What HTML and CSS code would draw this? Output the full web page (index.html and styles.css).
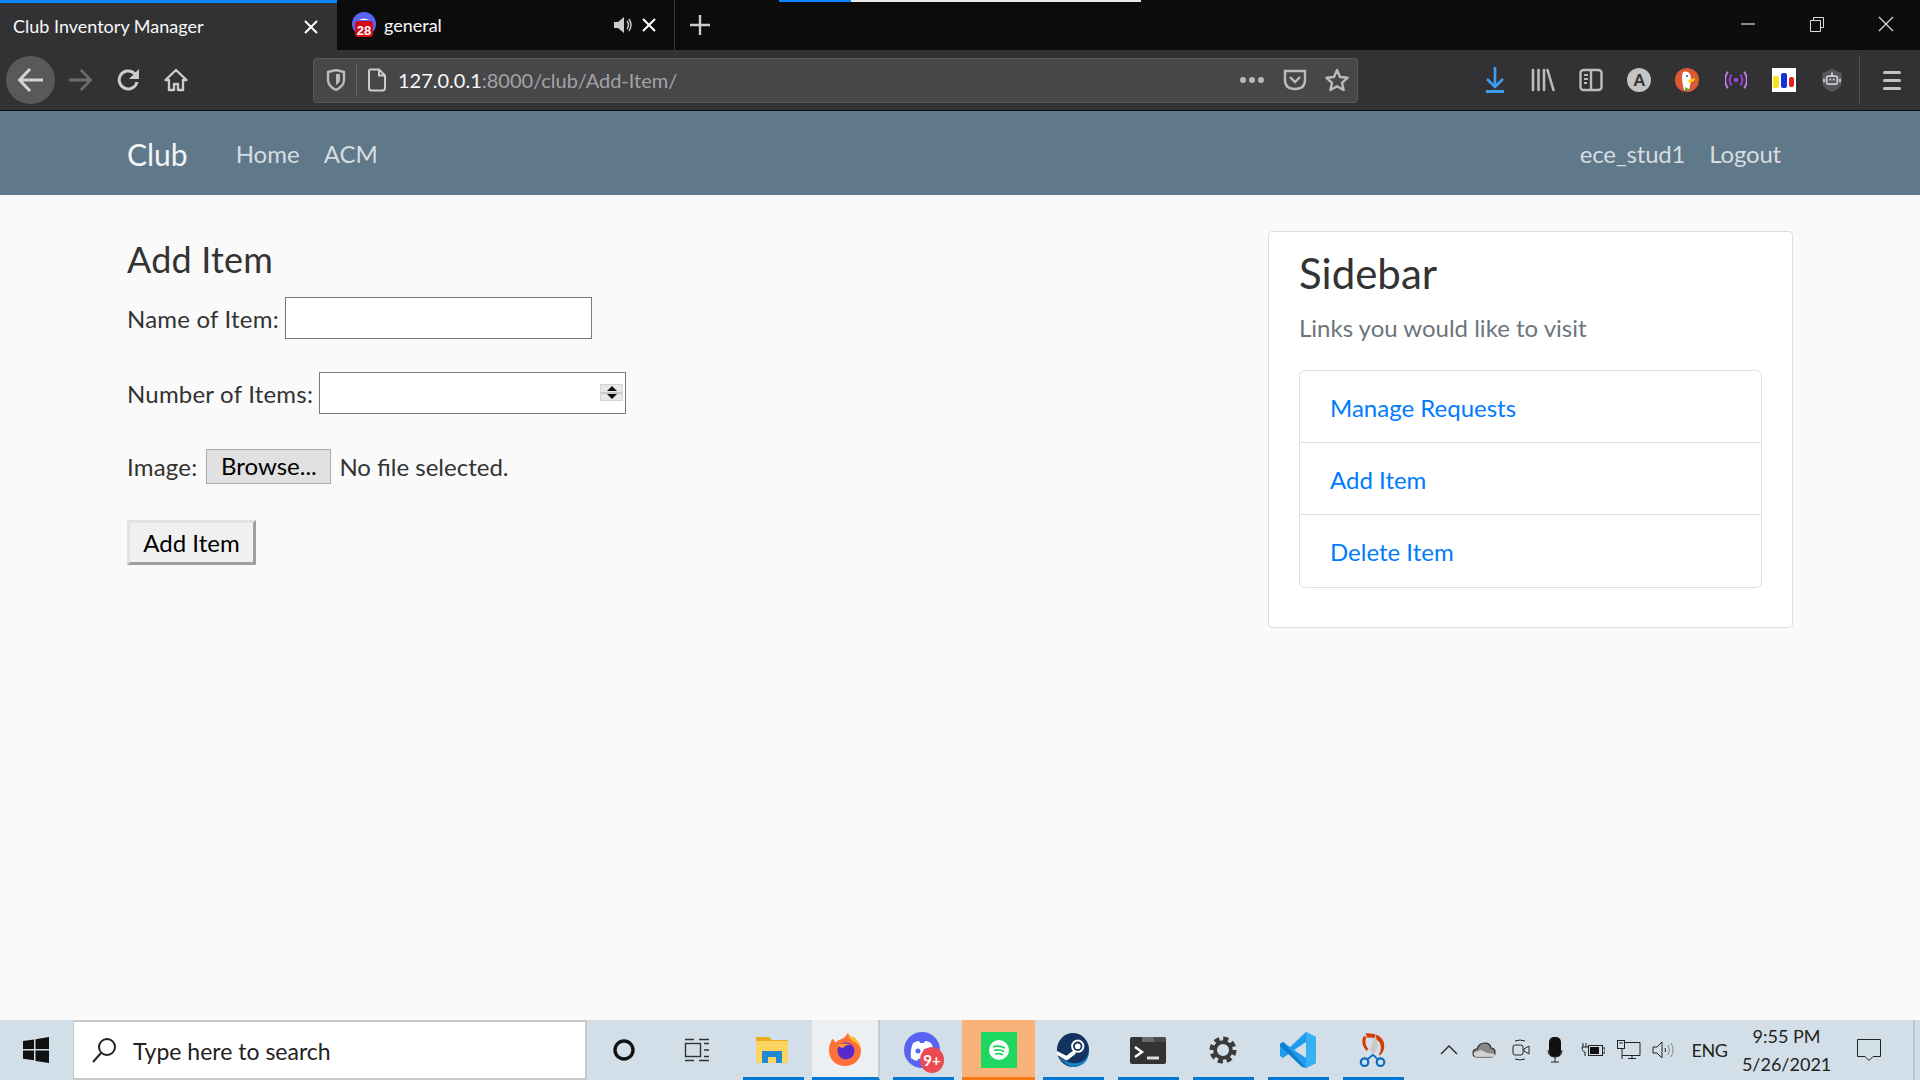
FILE: index.html
```html
<!DOCTYPE html>
<html lang="en">
<head>
  <meta charset="UTF-8">
  <title>Club Inventory Manager</title>
  <link rel="stylesheet" href="styles.css">
</head>
<body>
  <div class="tabbar">
    <div class="tab tab-active">
      <span class="tab-title">Club Inventory Manager</span>
      <svg class="tab-x" width="16" height="16" viewBox="0 0 16 16"><path d="M2 2l12 12M14 2L2 14" stroke="#fff" stroke-width="2"/></svg>
    </div>
    <div class="tab tab-other">
      <svg class="favicon" width="24" height="26" viewBox="0 0 24 26"><circle cx="12" cy="12" r="12" fill="#5865f2"/><path d="M7 8q5-3 10 0z" fill="#fff"/><rect x="3" y="9" width="18" height="16" rx="3" fill="#d40c13"/><text x="12" y="22.5" class="fav-num">28</text></svg>
      <span class="tab-title">general</span>
      <svg class="tab-sound" width="20" height="18" viewBox="0 0 20 18"><path d="M1 6h4l6-5v16l-6-5H1z" fill="#ccc"/><path d="M14 5q3 4 0 8M16 3q4 6 0 12" stroke="#ccc" stroke-width="1.4" fill="none"/></svg>
      <svg class="tab-x" width="16" height="16" viewBox="0 0 16 16"><path d="M2 2l12 12M14 2L2 14" stroke="#fff" stroke-width="2"/></svg>
    </div>
    <div class="tab-new">
      <svg width="22" height="22" viewBox="0 0 22 22"><path d="M11 1v20M1 11h20" stroke="#ccc" stroke-width="2.4"/></svg>
    </div>
    <div class="tab-fill"><div class="tab-progress"></div></div>
    <div class="win-btn"><svg width="16" height="16" viewBox="0 0 16 16"><path d="M1 8h14" stroke="#ddd" stroke-width="1.2"/></svg></div>
    <div class="win-btn"><svg width="16" height="16" viewBox="0 0 16 16"><path d="M1.500 4.500h10v11h-10zM4.500 4V1.500h10v10H12" stroke="#ddd" fill="none"/></svg></div>
    <div class="win-btn"><svg width="18" height="18" viewBox="0 0 18 18"><path d="M2 2l14 14M16 2L2 16" stroke="#ddd" stroke-width="1.2"/></svg></div>
  </div>

  <div class="toolbar">
    <div class="nav-btn nav-back"><svg width="28" height="26" viewBox="0 0 28 26"><path d="M26 13H3M13 2L2.500 13 13 24" stroke="#d4d4d4" stroke-width="3" fill="none"/></svg></div>
    <div class="nav-btn"><svg width="26" height="24" viewBox="0 0 28 26"><path d="M2 13h23M15 2l10.500 11L15 24" stroke="#6d6d6f" stroke-width="3" fill="none"/></svg></div>
    <div class="nav-btn"><svg width="24" height="24" viewBox="0 0 24 24"><path d="M20 14a9 9 0 1 1-3-9l4 3" stroke="#ccc" stroke-width="3" fill="none"/><path d="M22 1v10H12z" fill="#ccc"/></svg></div>
    <div class="nav-btn nav-home"><svg width="24" height="24" viewBox="0 0 24 24"><path d="M12 2L1.500 12H5v10h5v-6h4v6h5V12h3.500z" stroke="#ccc" stroke-width="2.400" fill="none" stroke-linejoin="round"/></svg></div>

    <div class="urlbar">
      <svg class="url-shield" width="20" height="22" viewBox="0 0 20 22"><path d="M2 3l8-2 8 2v8q0 6-8 10-8-4-8-10z" stroke="#bbb" stroke-width="2.400" fill="none"/><path d="M10 5h4v6q0 3-4 5z" fill="#bbb"/></svg>
      <span class="url-sep"></span>
      <svg class="url-page" width="20" height="24" viewBox="0 0 20 24"><path d="M3 1.500h9l6 6V20q0 2.500-2.500 2.500h-11Q2 22.500 2 20V3q0-1.500 1-1.500zM12 1.500v6h6" stroke="#ccc" stroke-width="2" fill="none"/></svg>
      <span class="url-text"><span class="url-host">127.0.0.1</span>:8000/club/Add-Item/</span>
      <svg class="url-dots" width="26" height="8" viewBox="0 0 26 8"><circle cx="4" cy="4" r="3" fill="#bbb"/><circle cx="13" cy="4" r="3" fill="#bbb"/><circle cx="22" cy="4" r="3" fill="#bbb"/></svg>
      <svg class="url-pocket" width="24" height="22" viewBox="0 0 24 22"><path d="M2 2h20v9q0 9-10 9T2 11z" stroke="#bbb" stroke-width="2.400" fill="none"/><path d="M7 8l5 5 5-5" stroke="#bbb" stroke-width="2.400" fill="none"/></svg>
      <svg class="url-star" width="24" height="24" viewBox="0 0 24 24"><path d="M12 2l3 7 7.500.8-5.500 5 1.600 7.200L12 18.300 5.400 22 7 14.800l-5.500-5L9 9z" stroke="#bbb" stroke-width="2.400" fill="none" stroke-linejoin="round"/></svg>
    </div>

    <div class="tool-icons">
      <div class="tool-slot"><svg width="20" height="26" viewBox="0 0 20 26"><path d="M10 0v20M2 12l8 8 8-8" stroke="#3d9df5" stroke-width="2.600" fill="none"/><path d="M1 24.500h18" stroke="#3d9df5" stroke-width="3"/></svg></div>
      <div class="tool-slot"><svg width="24" height="24" viewBox="0 0 24 24"><path d="M2 2v20M7.500 2v20M13 2v20M16.500 2l6 20" stroke="#bbb" stroke-width="2.600" stroke-linecap="round"/></svg></div>
      <div class="tool-slot"><svg width="24" height="24" viewBox="0 0 24 24"><rect x="1.500" y="2" width="21" height="20" rx="3" stroke="#bbb" stroke-width="2.400" fill="none"/><path d="M12 2v20" stroke="#bbb" stroke-width="2.400"/><path d="M5 7h4M5 11h4M5 15h3" stroke="#bbb" stroke-width="2"/></svg></div>
      <div class="tool-slot"><span class="ext-a">A</span></div>
      <div class="tool-slot"><svg width="24" height="24" viewBox="0 0 24 24"><circle cx="12" cy="12" r="12" fill="#de5833"/><path d="M8 4q7-2 8 6v3l-2 9H9Q7 14 7 10q0-4 1-6z" fill="#fff"/><path d="M13 12l7-2-1 3-5 2z" fill="#fdd20a"/><path d="M10 19l4 2v2l-4-1z" fill="#4cba3c"/><circle cx="12" cy="8" r="1" fill="#2d4f8e"/></svg></div>
      <div class="tool-slot"><svg width="22" height="20" viewBox="0 0 24 22"><circle cx="12" cy="11" r="2.500" fill="#a33fd6"/><path d="M7 5q-4 6 0 12M17 5q4 6 0 12" stroke="#a33fd6" stroke-width="2" fill="none"/><path d="M3 2q-6 9 0 18M21 2q6 9 0 18" stroke="#c77fe0" stroke-width="2" fill="none"/></svg></div>
      <div class="tool-slot"><svg width="24" height="24" viewBox="0 0 24 24"><rect width="24" height="24" fill="#fff"/><rect x="1" y="8" width="6" height="12" rx="2" fill="#f6e71c"/><rect x="9" y="5" width="6" height="15" rx="2" fill="#1432d8"/><rect x="17" y="9" width="5" height="10" rx="2" fill="#e6201f"/></svg></div>
      <div class="tool-slot"><svg width="24" height="25" viewBox="0 0 24 28"><path d="M12 1l11 5v9q0 8-11 12Q1 23 1 15V6z" fill="#55565a"/><rect x="6" y="9" width="12" height="9" rx="2" stroke="#ccc" stroke-width="2" fill="none"/><circle cx="10" cy="13" r="1.300" fill="#ccc"/><circle cx="14" cy="13" r="1.300" fill="#ccc"/><path d="M12 5v4M3 12v4M21 12v4" stroke="#ccc" stroke-width="2"/></svg></div>
      <span class="tool-sep"></span>
      <div class="tool-slot tool-menu"><span></span><span></span><span></span></div>
    </div>
  </div>

  <nav class="navbar">
    <a class="brand">Club</a>
    <a class="nav-link">Home</a>
    <a class="nav-link">ACM</a>
    <div class="nav-right">
      <a class="nav-link">ece_stud1</a>
      <a class="nav-link">Logout</a>
    </div>
  </nav>

  <main class="page">
    <form class="item-form">
      <h4 class="form-title">Add Item</h4>
      <div class="form-row">
        <label for="item-name">Name of Item:</label>
        <input id="item-name" class="field" type="text">
      </div>
      <div class="form-row row-number">
        <label for="item-count">Number of Items:</label>
        <div class="number-wrap">
          <input id="item-count" class="field" type="text">
          <span class="spinner"><i class="up"></i><i class="down"></i></span>
        </div>
      </div>
      <div class="form-row row-image">
        <label class="image-label">Image:</label>
        <button class="browse" type="button">Browse...</button>
        <span class="file-name">No file selected.</span>
      </div>
      <button class="submit" type="button">Add Item</button>
    </form>

    <aside class="sidebar">
      <h3 class="sidebar-title">Sidebar</h3>
      <p class="sidebar-note">Links you would like to visit</p>
      <ul class="link-list">
        <li><a>Manage Requests</a></li>
        <li><a>Add Item</a></li>
        <li><a>Delete Item</a></li>
      </ul>
    </aside>
  </main>

  <footer class="taskbar">
    <div class="start"><svg width="26" height="26" viewBox="0 0 26 26"><path d="M0 4l11-1.600V12H0zM12.500 2.200L26 0v12H12.500zM0 13.500h11v9.800L0 21.800zM12.500 13.500H26V26l-13.500-2z" fill="#111"/></svg></div>
    <div class="search">
      <svg width="26" height="26" viewBox="0 0 26 26"><circle cx="16" cy="10" r="8" stroke="#222" stroke-width="2" fill="none"/><path d="M10 16L2 25" stroke="#222" stroke-width="2"/></svg>
      <span class="search-text">Type here to search</span>
    </div>
    <div class="task-plain"><svg width="24" height="24" viewBox="0 0 24 24"><circle cx="12" cy="12" r="9" stroke="#111" stroke-width="3.400" fill="none"/></svg></div>
    <div class="task-plain task-view"><svg width="26" height="24" viewBox="0 0 26 24"><path d="M1 1.500h9M1 22.500h9M15 1.500h10M15 22.500h10" stroke="#333" stroke-width="1.400"/><rect x="1.500" y="5.500" width="15" height="13" stroke="#333" stroke-width="1.400" fill="none"/><path d="M20 5.500h5M20 12h5M20 18.500h5" stroke="#333" stroke-width="1.400"/></svg></div>

    <div class="apps">
      <div class="app"><svg width="32" height="26" viewBox="0 0 32 26"><path d="M0 0h13l3 3h16v23H0z" fill="#e9ad1d"/><rect y="4" width="32" height="22" rx="1" fill="#fcd462"/><path d="M6 26V14h20v12h-6v-6h-8v6z" fill="#1f8ad2"/></svg></div>
      <div class="app app-open"><svg width="34" height="34" viewBox="0 0 34 36"><path d="M17 35C7 35 0 28 0 18 0 14 2 8 4 6l3 4q3-3 7-4 3-1 6-6 2 4 7 5 6 5 7 13c0 10-7 17-17 17z" fill="#ff7139"/><path d="M20 0q2 4 7 5 6 5 7 13-2-6-8-9-5-3-6-9z" fill="#ffbd29"/><circle cx="18" cy="19" r="9" fill="#592acb"/><path d="M9 13q8-4 15 0-7-1-9 3-3 0-6-3z" fill="#ff9a2e"/></svg></div>
      <div class="app"><div class="discord">
        <svg width="36" height="36" viewBox="0 0 36 36"><circle cx="18" cy="18" r="18" fill="#5865f2"/><path d="M9 11q4-2 6-2l1 2h4l1-2q3 0 6 2 4 7 3 15-3 2-6 3l-1.500-2.500q-5 1.500-8 0L13 29q-3-1-6-3-1-8 2-15z" fill="#fff"/><circle cx="14" cy="19" r="2.500" fill="#5865f2"/><circle cx="22" cy="19" r="2.500" fill="#5865f2"/></svg>
        <span class="badge">9+</span>
      </div></div>
      <div class="app app-spotify"><div class="spotify-tile"><svg width="20" height="20" viewBox="0 0 20 20"><circle cx="10" cy="10" r="10" fill="#fff"/><path d="M4 7q6-2 12 1M5 10.500q5-1.500 10 1M6 14q4-1 8 .8" stroke="#1ed760" stroke-width="1.800" fill="none"/></svg></div></div>
      <div class="app"><svg width="34" height="34" viewBox="0 0 34 36"><ellipse cx="17" cy="18" rx="17" ry="18" fill="#123360"/><path d="M1 24q7 10 16 12 17-1 17-18-2 14-16 14-9-1-17-8z" fill="#1a83c4"/><circle cx="22" cy="14" r="6" stroke="#fff" stroke-width="2" fill="none"/><circle cx="22" cy="14" r="3" fill="#fff"/><path d="M0 19l10 5 8-6 2 4-8 6-2 1-10-6z" fill="#fff"/></svg></div>
      <div class="app"><svg width="36" height="27" viewBox="0 0 36 27"><rect width="36" height="27" rx="2" fill="#333"/><path d="M12 0h12v5H12z" fill="#6a6a6a"/><path d="M24 0h10l2 2v3H24z" fill="#4a4a4a"/><path d="M5 10l7 5-7 5" stroke="#fff" stroke-width="2.400" fill="none"/><path d="M17 21h12" stroke="#ddd" stroke-width="3"/></svg></div>
      <div class="app"><svg width="28" height="28" viewBox="0 0 30 30"><circle cx="15" cy="15" r="8.500" stroke="#3a3a3a" stroke-width="4" fill="none"/><circle cx="15" cy="15" r="12" stroke="#3a3a3a" stroke-width="5" stroke-dasharray="5.400 4" fill="none"/></svg></div>
      <div class="app"><svg width="36" height="36" viewBox="0 0 36 36"><path d="M26 0l10 5v26l-10 5-16-15-7 5-3-2V12l3-2 7 5zM26 10L14 18l12 8z" fill="#1f9cf0"/><path d="M26 0l10 5v26l-10 5z" fill="#35b0f2"/><path d="M0 12l3-2 23 26-4-1L0 14z" fill="#0d7ed0"/></svg></div>
      <div class="app"><svg width="30" height="36" viewBox="0 0 32 38"><path d="M8 1q20 0 20 14 0 6-5 10-1-2 1-5 2-8-4-12-4-3-10-2z" fill="#d83b01"/><path d="M6 4q-4 8 3 16l2-2Q6 12 9 5z" fill="#d83b01"/><path d="M19 2l2 15-5 7-3-6z" fill="#c8c8c8"/><path d="M16 24l-6 5M16 24l5 5" stroke="#0b6cc4" stroke-width="2"/><circle cx="7" cy="32" r="4" stroke="#0b6cc4" stroke-width="2.400" fill="none"/><circle cx="24" cy="32" r="4" stroke="#0b6cc4" stroke-width="2.400" fill="none"/></svg></div>
    </div>

    <div class="tray">
      <svg class="tray-chevron" width="18" height="10" viewBox="0 0 18 10"><path d="M1 9l8-8 8 8" stroke="#222" stroke-width="1.300" fill="none"/></svg>
      <svg class="tray-cloud" width="24" height="16" viewBox="0 0 24 16"><path d="M5 15q-4 0-4-4t4-4q2-6 8-6 5 0 6 5 4 0 4 4.500T19 15z" fill="#888" stroke="#222" stroke-width="1.200"/><path d="M1 11l8-3 6 3 8 1v3H3z" fill="#f2f2f2" opacity=".7"/></svg>
      <svg class="tray-cam" width="18" height="24" viewBox="0 0 18 24"><rect x="1" y="7" width="10" height="10" rx="2" stroke="#222" fill="none"/><path d="M12 11l5-3v8l-5-3z" stroke="#222" fill="none"/><path d="M3 3q5-2 10 0M3 21q5 2 10 0" stroke="#222" fill="none"/></svg>
      <svg class="tray-mic" width="16" height="26" viewBox="0 0 16 26"><rect x="2" y="0" width="12" height="20" rx="5" fill="#111"/><path d="M1 13q0 7 7 7t7-7M8 20v5M4 25h8" stroke="#222" fill="none"/></svg>
      <svg class="tray-batt" width="24" height="16" viewBox="0 0 24 16"><rect x="7.500" y="3.500" width="14" height="10" stroke="#222" fill="none"/><rect x="9" y="5" width="9" height="7" fill="#111"/><path d="M22 6h2v5h-2M1 5h6M1 5q0 5 3 5v4" stroke="#222" fill="none"/><path d="M2 5V1M5 5V1" stroke="#222"/></svg>
      <svg class="tray-net" width="24" height="20" viewBox="0 0 24 20"><path d="M5 2.500h18v13H5M5 9v10M11 18.500h8M15 15.500v3" stroke="#222" fill="none"/><rect x=".5" y=".5" width="7" height="8" stroke="#222" fill="#d3dfe8"/><path d="M2 3h4" stroke="#222"/></svg>
      <svg class="tray-vol" width="24" height="18" viewBox="0 0 24 18"><path d="M1 6h4l5-5v16l-5-5H1z" stroke="#222" fill="none"/><path d="M13 7q1 2 0 4" stroke="#222" fill="none"/><path d="M16 4q3 5 0 10M19 2q4 7 0 14" stroke="#888" fill="none"/></svg>
      <span class="tray-lang">ENG</span>
      <div class="clock"><span>9:55 PM</span><span>5/26/2021</span></div>
      <svg class="tray-note" width="24" height="24" viewBox="0 0 24 24"><path d="M.5 1.500h23v17H16l-4 4-4-4H.5z" stroke="#222" fill="none"/></svg>
      <span class="show-desktop"></span>
    </div>
  </footer>
</body>
</html>
```

FILE: styles.css
```css
* {
  box-sizing: border-box;
}
html, body {
  height: 100%;
}
body {
  margin: 0;
  display: flex;
  flex-direction: column;
  height: 1080px;
  overflow: hidden;
  background-color: #fafafa;
  color: #333333;
  font-family: "Lato", "Noto Sans", sans-serif;
  font-size: 24px;
  line-height: 1.5;
}

/* browser tabs */
.tabbar {
  display: flex;
  height: 50px;
  background-color: #0c0c0d;
  color: #f9f9fa;
  font-size: 18px;
}
.tab {
  display: flex;
  align-items: center;
  height: 50px;
}
.tab-active {
  width: 337px;
  padding: 0 18px 0 13px;
  background-color: #323234;
  border-top: 3px solid #0a84ff;
}
.tab-other {
  width: 338px;
  padding: 0 17px 0 15px;
  border-right: 1px solid #3a3a3c;
}
.favicon {
  margin-right: 8px;
}
.fav-num {
  font-family: "Liberation Sans", sans-serif;
  font-size: 13px;
  font-weight: bold;
  fill: #fff;
  text-anchor: middle;
}
.tab-title {
  flex: 1;
}
.tab-sound {
  margin-right: 8px;
}
.tab-new {
  display: flex;
  align-items: center;
  justify-content: center;
  width: 50px;
}
.tab-fill {
  flex: 1;
}
.tab-progress {
  width: 362px;
  height: 2px;
  margin-left: 54px;
  background: linear-gradient(to right, #0a84ff 0 72px, #e8e8e8 72px);
}
.win-btn {
  display: flex;
  align-items: center;
  justify-content: center;
  width: 69px;
  height: 48px;
}

/* browser toolbar */
.toolbar {
  display: flex;
  align-items: center;
  height: 61px;
  padding: 0 0 0 6px;
  background-color: #323234;
  border-bottom: 1px solid #0c0c0d;
}
.nav-btn {
  display: flex;
  align-items: center;
  justify-content: center;
  flex: none;
  width: 49px;
  height: 48px;
  border-radius: 50%;
}
.nav-back {
  background-color: #59595b;
}
.nav-home {
  padding-right: 3px;
}
.urlbar {
  display: flex;
  align-items: center;
  flex: none;
  width: 1045px;
  height: 45px;
  margin-left: 111px;
  padding: 0 8px 0 12px;
  background-color: #474749;
  border: 1px solid #58585a;
  border-radius: 3px;
  font-size: 20px;
  color: #a3a3a5;
}
.url-sep {
  width: 1px;
  height: 32px;
  margin: 0 10px 0 10px;
  background-color: #66666a;
}
.url-text {
  flex: 1;
  margin-left: 11px;
}
.url-host {
  color: #f9f9fa;
}
.url-dots {
  margin-right: 18px;
}
.url-pocket {
  margin-right: 18px;
}
.tool-icons {
  display: flex;
  align-items: center;
  flex: none;
  height: 50px;
  padding-left: 113px;
}
.tool-slot {
  display: flex;
  align-items: center;
  justify-content: center;
  width: 48.100px;
  height: 48px;
  flex: none;
}
.ext-a {
  display: flex;
  align-items: center;
  justify-content: center;
  width: 24px;
  height: 24px;
  border-radius: 50%;
  background-color: #c4c4c4;
  color: #333;
  font-size: 16px;
  font-weight: 900;
}
.tool-sep {
  width: 1px;
  height: 50px;
  margin-left: 3px;
  background-color: #4e4e50;
}
.tool-menu {
  flex-direction: column;
  gap: 5px;
  width: 60px;
  padding-left: 4px;
}
.tool-menu span {
  display: block;
  width: 18px;
  height: 3px;
  border-radius: 2px;
  background-color: #c4c4c4;
}

/* site navbar */
.navbar {
  display: flex;
  align-items: center;
  height: 84px;
  padding: 2px 127px 0;
  background-color: #5f788a;
  color: rgba(255, 255, 255, 0.75);
}
.brand {
  margin-right: 36px;
  font-size: 30px;
  color: #fff;
  opacity: 0.92;
}
.navbar .nav-link {
  padding: 0 12px;
}
.nav-right {
  display: flex;
  margin-left: auto;
  letter-spacing: -0.2px;
}
.nav-right .nav-link:last-child {
  padding-right: 12px;
}

/* page */
.page {
  display: flex;
  flex: 1;
  justify-content: space-between;
  align-items: flex-start;
  padding: 36px 127px 0;
}
.item-form {
  display: flex;
  flex-direction: column;
  align-items: flex-start;
  letter-spacing: 0.2px;
}
.form-title {
  margin: 7px 0 16px;
  font-size: 36px;
  font-weight: 400;
  line-height: 43px;
}
.form-row {
  display: flex;
  align-items: center;
  gap: 6px;
  height: 42px;
}
.form-row label, .file-name {
  padding-top: 2px;
}
.image-label {
  margin-right: 3px;
}
.file-name {
  letter-spacing: 0;
}
.field {
  display: block;
  width: 307px;
  height: 42px;
  padding: 0 6px;
  background-color: #fff;
  border: 1.500px solid #7a7a7a;
  font: inherit;
}
.row-number {
  margin-top: 33px;
}
.number-wrap {
  position: relative;
}
.spinner {
  position: absolute;
  top: 12px;
  right: 3px;
  display: flex;
  flex-direction: column;
  justify-content: center;
  gap: 3px;
  width: 23px;
  height: 17px;
  background: linear-gradient(#e8e8e8 7px, #c8c8c8 7px, #c8c8c8 9px, #e8e8e8 9px);
  border: 1px solid #d4d4d4;
}
.spinner i {
  align-self: center;
  width: 0;
  height: 0;
  border-left: 5px solid transparent;
  border-right: 5px solid transparent;
}
.spinner .up {
  border-bottom: 5px solid #111;
}
.spinner .down {
  border-top: 5px solid #111;
}
.row-image {
  height: 34px;
  margin-top: 35px;
}
.browse {
  width: 125px;
  height: 35px;
  padding: 0;
  margin-right: 2px;
  background-color: #e1e1e1;
  border: 1px solid #adadad;
  color: #000;
  font: inherit;
  line-height: 1;
}
.submit {
  width: 129px;
  height: 45px;
  margin-top: 37px;
  padding: 0;
  background-color: #f0f0f0;
  border: 3px solid;
  border-color: #e3e3e3 #a0a0a0 #a0a0a0 #e3e3e3;
  color: #000;
  font: inherit;
  line-height: 1;
}
.sidebar {
  width: 525px;
  padding: 16px 30px 39px;
  background-color: #fff;
  border: 1px solid #dddddd;
  border-radius: 4px;
}
.sidebar-title {
  margin: 0 0 12px;
  font-size: 42px;
  font-weight: 400;
  line-height: 1.2;
}
.sidebar-note {
  margin: 0 0 24px;
  color: #6c757d;
}
.link-list {
  margin: 0;
  padding: 0;
  list-style: none;
  background-color: #fff;
  border: 1px solid #dfdfdf;
  border-radius: 6px;
}
.link-list li {
  height: 72px;
  padding: 19px 30px 0;
  border-bottom: 1px solid #dfdfdf;
  color: #007bff;
}
.link-list li:last-child {
  border-bottom: 0;
}

/* windows taskbar */
.taskbar {
  display: flex;
  align-items: center;
  flex: none;
  height: 60px;
  background-color: #d3dfe8;
  color: #222;
}
.start {
  display: flex;
  justify-content: center;
  flex: none;
  width: 73px;
  padding-right: 2px;
}
.search {
  display: flex;
  align-items: center;
  flex: none;
  gap: 16px;
  width: 514px;
  height: 60px;
  padding-left: 17px;
  background-color: #fff;
  border: 2px solid #c8c8c8;
  border-width: 2px 2px 2px 1px;
}
.search-text {
  padding-top: 2px;
  font-size: 23px;
}
.task-plain {
  display: flex;
  align-items: center;
  justify-content: center;
  flex: none;
  width: 73px;
}
.apps {
  display: flex;
  flex: none;
  margin-left: 1.500px;
}
.app {
  display: flex;
  align-items: center;
  justify-content: center;
  flex: none;
  width: 75px;
  height: 60px;
  padding-top: 3px;
  border-bottom: 3px solid #0078d4;
  border-image: linear-gradient(to right, #d3dfe8 8px, #0078d4 8px, #0078d4 69px, #d3dfe8 69px) 0 0 3 0;
}
.app-open {
  width: 68px;
  margin: 0 4.500px 0 2.500px;
  background-color: #ecf0f3;
  border-image: none;
  border-right: 2px solid #c4ccd2;
}
.app-spotify {
  width: 73px;
  margin-left: 2.500px;
  background-color: #f8b27a;
  border-image: none;
  border-bottom-color: #f77a12;
}
.discord {
  position: relative;
  width: 36px;
  height: 36px;
}
.badge {
  position: absolute;
  top: 15px;
  left: 16px;
  width: 24px;
  height: 26px;
  border-radius: 50%;
  background-color: #ea4a52;
  color: #fff;
  font-size: 15px;
  font-weight: 700;
  line-height: 26px;
  text-align: center;
}
.spotify-tile {
  display: flex;
  align-items: center;
  justify-content: center;
  width: 36px;
  height: 36px;
  background-color: #1ed760;
}
.tray {
  display: flex;
  align-items: center;
  flex: 1;
  height: 60px;
  padding-left: 29.500px;
  font-size: 18px;
}
.tray svg {
  flex: none;
}
.tray-cloud {
  margin-left: 14px;
}
.tray-cam {
  margin-left: 16px;
}
.tray-mic {
  margin-left: 17px;
}
.tray-batt {
  margin-left: 18px;
}
.tray-net {
  margin-left: 12px;
}
.tray-vol {
  margin-left: 11px;
}
.tray-lang {
  margin-left: 16px;
  letter-spacing: -0.4px;
}
.clock {
  display: flex;
  flex-direction: column;
  align-items: center;
  width: 110px;
  margin-left: 4px;
  line-height: 28px;
}
.tray-note {
  margin-left: 15px;
}
.show-desktop {
  width: 2px;
  height: 60px;
  margin-left: 32px;
  background-color: #bcc8d0;
}
```
